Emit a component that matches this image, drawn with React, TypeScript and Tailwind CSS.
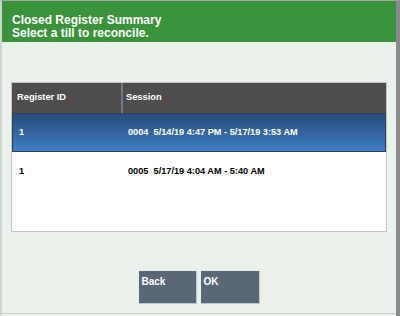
export default function App() {
  const font = { fontFamily: '"Liberation Sans", Arial, sans-serif' };
  return (
    <div
      className="w-[400px] h-[316px] bg-[#eaf1ea] border-t border-[#a9a9a9] border-l-2 border-l-[#cfd6cf] border-r-4 border-r-[#8a8a8a] flex flex-col"
      style={font}
    >
      <div className="h-[41px] bg-[#3a923a] pl-[10px] pt-[13px] text-white font-bold text-[12px] leading-[13px]">
        <div>Closed Register Summary</div>
        <div>Select a till to reconcile.</div>
      </div>

      <div className="mx-[9px] mt-[40px] h-[150px] bg-white border border-[#c4c4c4] flex flex-col">
        <div className="h-[30px] bg-[#4d4d4d] flex text-white font-bold text-[9.3px]">
          <div className="w-[111px] border-r-2 border-[#7a7a7a] flex items-center pl-[5px]">Register ID</div>
          <div className="flex-1 flex items-center pl-[3px]">Session</div>
        </div>
        <div className="h-[39px] bg-gradient-to-b from-[#284a7a] to-[#3f80c4] border border-[#2d3e55] flex items-center text-white font-bold text-[9.2px]">
          <div className="w-[112px] pl-[6px]">1</div>
          <div className="flex-1 pl-[3px] whitespace-pre">0004  5/14/19 4:47 PM - 5/17/19 3:53 AM</div>
        </div>
        <div className="h-[39px] flex items-center text-black font-bold text-[9.2px]">
          <div className="w-[113px] pl-[7px]">1</div>
          <div className="flex-1 pl-[3px] whitespace-pre">0005  5/17/19 4:04 AM - 5:40 AM</div>
        </div>
      </div>

      <div className="mt-[39px] flex justify-center gap-[4px]">
        <button className="w-[58px] h-[33px] bg-[#596877] border-r border-b border-[#c0c7cf] text-white font-bold text-[10px] text-left pl-[3px] pt-[3px] flex items-start">Back</button>
        <button className="w-[59px] h-[33px] bg-[#596877] border-r border-b border-[#c0c7cf] text-white font-bold text-[10px] text-left pl-[3px] pt-[3px] flex items-start">OK</button>
      </div>

      <div className="mt-auto mb-[2px] border-b border-[#c8cfc8]" />
    </div>
  );
}
